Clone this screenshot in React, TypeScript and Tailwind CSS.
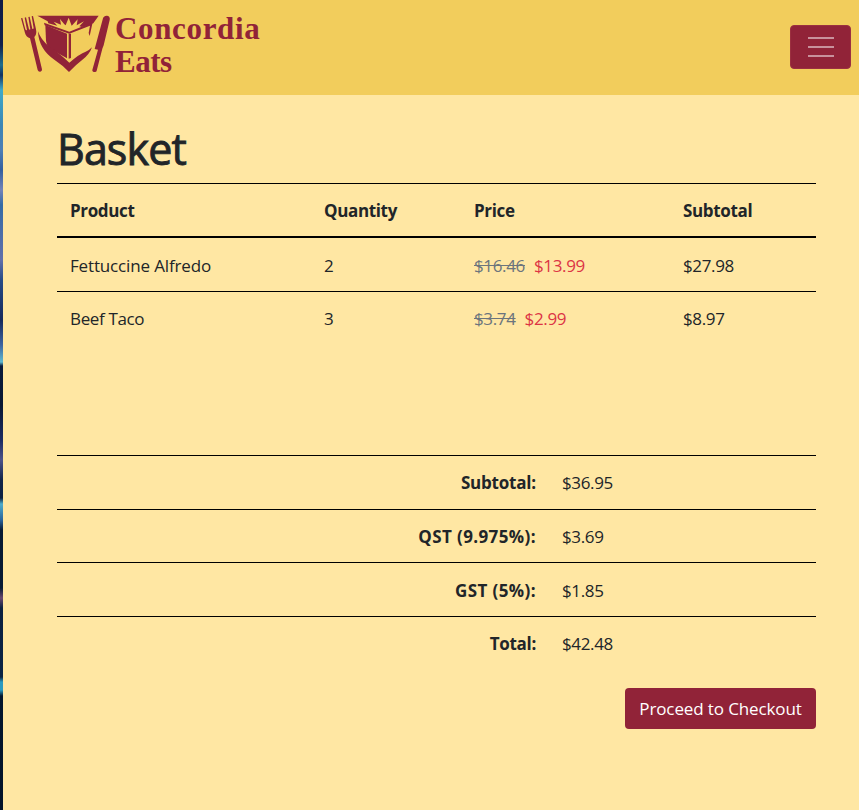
import React from "react";

const items = [
  { name: "Fettuccine Alfredo", qty: 2, was: "$16.46", now: "$13.99", subtotal: "$27.98", row: "h-[54px] border-b pt-[2px]", track: "tracking-[-0.15px]" },
  { name: "Beef Taco", qty: 3, was: "$3.74", now: "$2.99", subtotal: "$8.97", row: "h-[53px]", track: "tracking-[-0.35px]" },
];

const totals = [
  { label: "Subtotal:", value: "$36.95", row: "h-[54px]", track: "tracking-[-0.2px]" },
  { label: "QST (9.975%):", value: "$3.69", row: "h-[53px] pt-px", track: "tracking-[0.4px]" },
  { label: "GST (5%):", value: "$1.85", row: "h-[54px] pt-[2px]", track: "tracking-[0.4px]" },
  { label: "Total:", value: "$42.48", row: "h-[54px]", track: "tracking-[-0.28px]" },
];

function Logo() {
  return (
    <svg viewBox="60 42 276 180" className="h-[60px] w-[92px] shrink-0" fill="#912338">
      <path d="M63 55l4-1 9 34q2 4 5 2L74 53l4-1 9 36q2 2 4 0L85 51l4-1 8 36q2 3 4-1L95 49l4-1 9 40q3 15-5 23l23 97q1 6-5 7-6 1-8-5L90 115q-11-3-15-16z" />
      <path d="M329 60c4-15-17-17-20-5l-25 92 10 2-17 61c-1 7 11 9 13 2l17-66 4-10z" />
      <path d="M112 47h184l-16 23-34 11-8-2 14-15-22 12 3-18-15 16-3 3-9-24-9 23-4-3-13-16 3 17-22-9 11 12-27-7-2-6z" />
      <path d="M136 75l65 26v74l-50-28q-11-8-13-25z" />
      <path d="M132 68l76 27 70-28-9 41-3-9 4-22-62 24-74-25z" />
      <path d="M206 101h7v73l-7 2z" />
      <path d="M114 94q8 25 34 46 29 18 60 48 31-27 49-33 12-5 19-13-7 20-27 36-22 17-42 38-20-21-43-36-48-32-50-86z" />
    </svg>
  );
}

export default function App() {
  return (
    <div className="flex h-[810px] w-full overflow-hidden bg-[#ffe7a3] font-['Open_Sans','Noto_Sans',sans-serif] text-[17px] leading-[26px] text-[#212529]">
      <div className="w-[3px] shrink-0 bg-[linear-gradient(to_bottom,#101b45_0px,#12204a_45px,#1f6e8c_65px,#123261_75px,#3fa9c9_90px,#3c86b5_125px,#4f7fb5_150px,#345f9e_170px,#7383b8_190px,#356ba5_205px,#6270aa_260px,#274b86_280px,#16295b_320px,#3e64a0_345px,#60b9cf_362px,#0a1b3b_366px,#091733_405px,#1b2b62_440px,#4d5389_460px,#122449_480px,#0c2041_498px,#4fadcb_504px,#2a639b_520px,#071a34_530px,#071a34_588px,#69486f_598px,#0b2040_608px,#0a2344_677px,#2b9ac0_682px,#2b9ac0_690px,#04162d_696px,#031329_810px)]" />
      <div className="min-w-0 flex-1">
        <header className="flex h-[95px] items-center justify-between bg-[#f2cd5c] pr-2">
          <a className="flex items-center pb-[7px] pl-[17px] font-['Liberation_Serif',serif] text-[31px] leading-[33px] font-bold text-[#912338]">
            <Logo />
            <span className="ml-[3px] w-[160px] pt-[2px] tracking-[0.65px]">
              Concordia <span className="tracking-[-0.5px]">Eats</span>
            </span>
          </a>
          <button aria-label="Menu" className="mb-px flex h-11 w-[61px] flex-col items-center justify-center gap-[7px] rounded-[4px] border border-[#9b3040] bg-[#912338]">
            <span className="h-[2px] w-[26px] bg-[#c8919c]" />
            <span className="h-[2px] w-[26px] bg-[#c8919c]" />
            <span className="h-[2px] w-[26px] bg-[#c8919c]" />
          </button>
        </header>
        <main className="pt-[27px] pr-[43px] pl-[54px]">
          <h1 className="h-[61px] text-[43px] leading-[53px] tracking-[-0.9px] [-webkit-text-stroke:0.9px_#212529]">Basket</h1>
          <section className="h-[272px] tracking-[-0.35px]">
            <div className="grid h-[55px] grid-cols-[254px_150px_209px_1fr] items-center border-t border-b-2 border-black pt-[2px] pl-[13px] font-bold">
              <span>Product</span>
              <span>Quantity</span>
              <span>Price</span>
              <span>Subtotal</span>
            </div>
            {items.map((i) => (
              <div key={i.name} className={`grid grid-cols-[254px_150px_209px_1fr] items-center border-black pl-[13px] ${i.row}`}>
                <span className={i.track}>{i.name}</span>
                <span>{i.qty}</span>
                <span className="flex gap-[9px]">
                  <s className="text-[#6c757d]">{i.was}</s>
                  <span className="text-[#dc3545]">{i.now}</span>
                </span>
                <span>{i.subtotal}</span>
              </div>
            ))}
          </section>
          <section>
            {totals.map((t) => (
              <div key={t.label} className={`grid grid-cols-[479px_1fr] items-center gap-[26px] border-t border-black ${t.row}`}>
                <span className={`text-right font-bold ${t.track}`}>{t.label}</span>
                <span className="tracking-[-0.35px]">{t.value}</span>
              </div>
            ))}
          </section>
          <div className="flex justify-end pt-[18px]">
            <button className="h-[41px] w-[191px] rounded-[4px] bg-[#912338] tracking-[-0.12px] whitespace-nowrap text-white">Proceed to Checkout</button>
          </div>
        </main>
      </div>
    </div>
  );
}
